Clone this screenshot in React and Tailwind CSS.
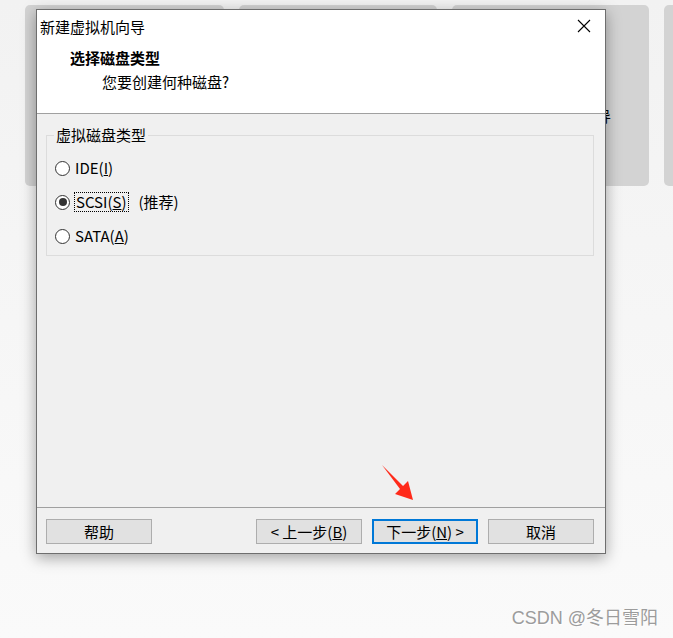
import React from 'react';

const font = "font-['Noto_Sans_CJK_SC','Noto_Sans',sans-serif]";

function Radio({ checked }) {
    return (
        <span className="w-[15px] h-[15px] rounded-full border border-[#333333] bg-white flex items-center justify-center shrink-0">
            {checked && <span className="w-[8px] h-[8px] rounded-full bg-[#333333]" />}
        </span>
    );
}

function Btn({ children, primary }) {
    return (
        <button
            className={`w-[106px] h-[25px] bg-[#e1e1e1] text-[15px] leading-none text-black flex items-center justify-center ${primary ? 'border-2 border-[#0078d7]' : 'border border-[#adadad]'}`}
        >
            {children}
        </button>
    );
}

export default function App() {
    return (
        <div className={`relative w-[673px] h-[638px] overflow-hidden bg-gradient-to-b from-[#f2f2f2] to-[#fafafa] ${font}`}>
            {/* background cards */}
            <div className="flex gap-[15px] pl-[25px] pt-[5px]">
                <div className="shrink-0 w-[199px] h-[181px] rounded-[5px] bg-[#d3d3d3]" />
                <div className="shrink-0 w-[198px] h-[181px] rounded-[5px] bg-[#d3d3d3]" />
                <div className="shrink-0 w-[197px] h-[181px] rounded-[5px] bg-[#d3d3d3] pt-[101px] pr-[38px] text-right text-[15px] leading-[20px] text-black">
                    向导
                </div>
                <div className="shrink-0 w-[200px] h-[181px] rounded-[5px] bg-[#d3d3d3]" />
            </div>

            {/* dialog window */}
            <div className="absolute left-[36px] top-[9px] w-[570px] h-[545px] border border-[#6e6e6e] bg-[#f0f0f0] flex flex-col shadow-[0_4px_14px_rgba(0,0,0,0.35)]">
                <div className="bg-white h-[104px] border-b border-[#a0a0a0] shrink-0">
                    <div className="h-[34px] flex items-center justify-between pl-[3px] pr-[14px]">
                        <span className="text-[15px] leading-[20px] text-black">新建虚拟机向导</span>
                        <svg width="14" height="14" viewBox="0 0 14 14" className="-mt-[3px]">
                            <path d="M1 1 L13 13 M13 1 L1 13" stroke="#000" strokeWidth="1.1" fill="none" />
                        </svg>
                    </div>
                    <div className="mt-[4px] pl-[33px] text-[15px] leading-[20px] font-bold text-black">选择磁盘类型</div>
                    <div className="mt-[4px] pl-[65px] text-[15px] leading-[20px] text-black">您要创建何种磁盘?</div>
                </div>

                <div className="flex-1 px-[9px] pr-[11px] pt-[11px]">
                    <fieldset className="border border-[#dcdcdc] pb-[7px]">
                        <legend className="ml-[7px] px-[2px] text-[15px] leading-[20px] text-black">虚拟磁盘类型</legend>
                        <div className="flex flex-col gap-[10px] pt-[11px] pl-[8px] text-[15px] text-black">
                            <div className="h-[24px] flex items-center gap-[5px]">
                                <Radio />
                                <span className="leading-[20px]">IDE(<span className="underline">I</span>)</span>
                            </div>
                            <div className="h-[24px] flex items-center gap-[4px]">
                                <Radio checked />
                                <span className="leading-[18px] border border-dotted border-black px-[1px]">SCSI(<span className="underline">S</span>)</span>
                                <span className="ml-[6px] leading-[20px]">(推荐)</span>
                            </div>
                            <div className="h-[24px] flex items-center gap-[5px]">
                                <Radio />
                                <span className="leading-[20px]">SATA(<span className="underline">A</span>)</span>
                            </div>
                        </div>
                    </fieldset>
                </div>

                <div className="border-t border-[#a0a0a0] pt-[11px] pb-[9px] pl-[9px] pr-[11px] flex justify-between shrink-0">
                    <Btn>帮助</Btn>
                    <div className="flex gap-[10px]">
                        <Btn>&lt; 上一步(<span className="underline">B</span>)</Btn>
                        <Btn primary>下一步(<span className="underline">N</span>) &gt;</Btn>
                        <Btn>取消</Btn>
                    </div>
                </div>
            </div>

            {/* red annotation arrow */}
            <svg className="absolute left-0 top-0" width="673" height="638" viewBox="0 0 673 638">
                <polygon points="382,465 403,486 408,481 413,500 395,494 400,489" fill="#ff2a1a" />
            </svg>

            {/* watermark */}
            <div className="absolute right-[15px] top-[607px] font-['Liberation_Sans','Noto_Sans_CJK_SC',sans-serif] text-[18px] leading-[22px] text-[#9c9c9c] [text-shadow:1px_1px_0_#ffffff]">
                CSDN @冬日雪阳
            </div>
        </div>
    );
}
